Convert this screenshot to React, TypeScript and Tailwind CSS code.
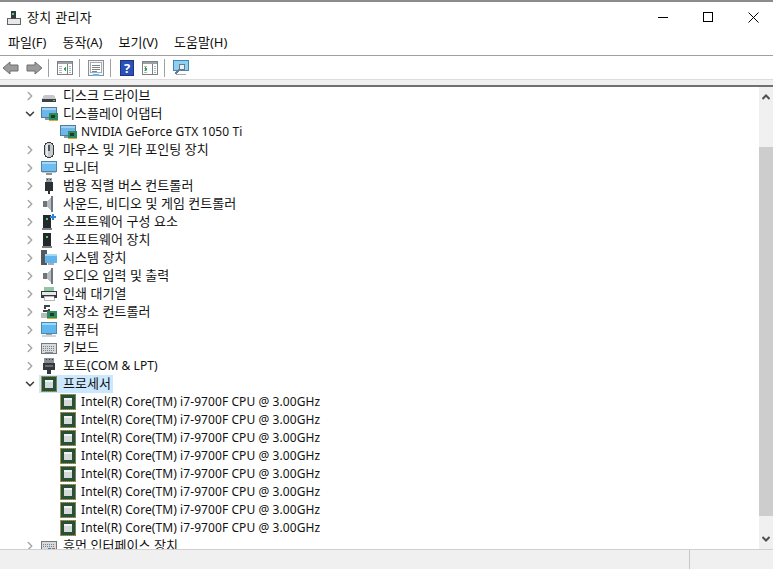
import type { ReactNode } from "react";
import { ChevronRight, ChevronDown } from "lucide-react";

const font = "font-['Noto_Sans','Noto_Sans_CJK_KR',sans-serif]";

const Icon = ({ children, className = "" }: { children: ReactNode; className?: string }) => (
  <svg viewBox="0 0 16 16" className={`w-4 h-4 shrink-0 ${className}`} shapeRendering="crispEdges">
    {children}
  </svg>
);

// small monitor + board shared by display adapter rows
const AdapterIcon = () => (
  <svg viewBox="0 0 18 16" className="w-[18px] h-4 shrink-0" shapeRendering="crispEdges">
    <rect x="0.5" y="1.5" width="15" height="10" fill="#6fb7ea" stroke="#4b7d9f" />
    <rect x="1" y="2" width="14" height="2" fill="#9fd3f5" />
    <rect x="4" y="12" width="6" height="2" fill="#8a9aa5" />
    <rect x="8" y="7" width="9" height="8" fill="#2f8a5b" />
    <rect x="10" y="9" width="4" height="3" fill="#1b3d2a" />
    <rect x="8" y="14" width="9" height="1" fill="#d9a93a" />
  </svg>
);

const CpuIcon = () => (
  <svg viewBox="0 0 16 16" className="w-4 h-4 shrink-0" shapeRendering="crispEdges">
    <rect x="0" y="0" width="16" height="16" fill="#a8924a" />
    <path d="M1 0v16M3 0v16M5 0v16M7 0v16M9 0v16M11 0v16M13 0v16M15 0v16" stroke="#5d6b45" strokeWidth="0.5" />
    <rect x="1" y="1" width="14" height="14" fill="#24513b" />
    <rect x="4" y="4" width="8" height="8" fill="#d5d9d7" />
    <rect x="4" y="4" width="8" height="2" fill="#f1f2f1" />
  </svg>
);

const DiskIcon = () => (
  <Icon>
    <path d="M3 7h10l2 4v3H1v-3z" fill="#c4c8cb" />
    <rect x="1" y="11" width="14" height="3" fill="#3b4044" />
    <rect x="12" y="12" width="2" height="1" fill="#58d06a" />
  </Icon>
);

const MouseIcon = () => (
  <Icon>
    <rect x="3.5" y="0.5" width="9" height="15" rx="4.5" fill="#c3c8cc" stroke="#34393d" />
    <rect x="5" y="2" width="2" height="12" fill="#e6e8ea" />
    <rect x="7" y="3" width="2" height="6" fill="#4f575d" />
  </Icon>
);

const MonitorIcon = () => (
  <Icon>
    <rect x="0.5" y="1.5" width="15" height="10" fill="#6ebcf0" stroke="#4f87ac" />
    <rect x="1" y="2" width="14" height="2" fill="#a4d8f7" />
    <rect x="1" y="12" width="14" height="1" fill="#c8ccd0" />
    <rect x="5" y="13" width="6" height="2" fill="#8c9499" />
  </Icon>
);

const UsbIcon = () => (
  <Icon>
    <rect x="5" y="0" width="6" height="4" fill="#9aa0a4" />
    <rect x="6" y="1" width="1" height="1" fill="#33383c" />
    <rect x="9" y="1" width="1" height="1" fill="#33383c" />
    <rect x="4" y="4" width="8" height="9" fill="#2c3134" />
    <rect x="7" y="13" width="2" height="3" fill="#2c3134" />
  </Icon>
);

const SpeakerIcon = () => (
  <Icon>
    <path d="M2 5h4v6H2z" fill="#6f7579" />
    <path d="M6 5l5-5v16l-5-5z" fill="#b7bcc0" />
    <rect x="10" y="0" width="2" height="16" fill="#70767b" />
  </Icon>
);

const SoftwareIcon = ({ plus = false }: { plus?: boolean }) => (
  <Icon>
    <rect x="2" y="1" width="8" height="13" fill="#24282b" />
    <rect x="1" y="14" width="10" height="2" fill="#7c8287" />
    <rect x="5" y="4" width="2" height="2" fill="#58d06a" />
    {plus && <path d="M11 0h2v2h2v2h-2v2h-2V4H9V2h2z" fill="#2f86d6" />}
  </Icon>
);

const SystemIcon = () => (
  <Icon>
    <rect x="0" y="0" width="6" height="15" fill="#55595d" />
    <rect x="4" y="4" width="12" height="9" fill="#62b4ec" />
    <rect x="4" y="4" width="12" height="2" fill="#a4d8f7" />
    <rect x="7" y="13" width="6" height="2" fill="#a5abb0" />
  </Icon>
);

const PrinterIcon = () => (
  <Icon>
    <rect x="3" y="1" width="10" height="4" fill="#8ec7a3" />
    <rect x="0" y="5" width="16" height="7" fill="#34383b" />
    <rect x="1" y="6" width="14" height="3" fill="#e6e8ea" />
    <rect x="3" y="10" width="10" height="4" fill="#ffffff" stroke="#6b7074" strokeWidth="0.5" />
  </Icon>
);

const StorageIcon = () => (
  <Icon>
    <path d="M3 1h6v2H5v2h4v3H2V6h5V5H3z" fill="#3f4448" />
    <rect x="0" y="9" width="8" height="5" fill="#b7bcc0" />
    <rect x="6" y="7" width="10" height="8" fill="#2f8a5b" />
    <rect x="9" y="9" width="4" height="3" fill="#1b3d2a" />
    <rect x="6" y="14" width="10" height="1" fill="#d9a93a" />
  </Icon>
);

const ComputerIcon = () => (
  <Icon>
    <rect x="0.5" y="0.5" width="15" height="11" fill="#5fb8ee" stroke="#4f87ac" />
    <rect x="1" y="1" width="14" height="2" fill="#a4d8f7" />
    <rect x="5" y="12" width="6" height="1" fill="#9aa0a5" />
    <rect x="1" y="13" width="14" height="2" fill="#d2d5d8" />
  </Icon>
);

const KeyboardIcon = () => (
  <Icon>
    <rect x="0.5" y="3.5" width="15" height="10" fill="#d7dadc" stroke="#73797e" />
    <path d="M2 6h12M2 8h12M2 10h12" stroke="#7d8287" strokeDasharray="1 1" />
    <rect x="4" y="12" width="8" height="1" fill="#8a8f94" />
  </Icon>
);

const PortIcon = () => (
  <Icon>
    <rect x="3" y="0" width="10" height="5" fill="#8a9095" />
    <path d="M5 1h1v1H5zM8 1h1v1H8zM11 1h1v1h-1z" fill="#34393d" />
    <rect x="2" y="5" width="12" height="7" fill="#34393d" />
    <rect x="4" y="7" width="8" height="2" fill="#6a7075" />
    <rect x="6" y="12" width="4" height="4" fill="#34393d" />
  </Icon>
);

const HidIcon = () => (
  <Icon>
    <rect x="0.5" y="3.5" width="15" height="10" fill="#d7dadc" stroke="#73797e" />
    <path d="M2 6h12M2 8h12" stroke="#7d8287" strokeDasharray="1 1" />
    <rect x="7" y="10" width="3" height="3" fill="#2f86d6" />
    <rect x="11" y="10" width="3" height="3" fill="#d9534f" />
  </Icon>
);

type Row = { label: ReactNode; icon: ReactNode; open?: boolean; selected?: boolean };

const cpu = "Intel(R) Core(TM) i7-9700F CPU @ 3.00GHz";

const TopRow = ({ label, icon, open, selected }: Row) => (
  <div className="h-[18px] flex items-center shrink-0">
    <div className="w-[39px] pl-[23px] shrink-0">
      {open ? (
        <ChevronDown className="w-[14px] h-[14px] text-[#404040]" strokeWidth={2.75} />
      ) : (
        <ChevronRight className="w-[14px] h-[14px] text-[#a6a6a6]" strokeWidth={2.5} />
      )}
    </div>
    <div className={`h-[18px] flex items-center pl-[2px] pr-[2px] ${selected ? "bg-[#cce8ff]" : ""}`}>
      <div className="w-[19px]">{icon}</div>
      <span className="text-[13px] leading-[16px] mb-[2px] pl-[3px] text-[#111] tracking-[0.05px] whitespace-nowrap">{label}</span>
    </div>
  </div>
);

const ChildRow = ({ label, icon }: { label: string; icon: ReactNode }) => (
  <div className="h-[18px] flex items-center pl-[60px] shrink-0">
    <div className="w-[21px]">{icon}</div>
    <span className="text-[12px] leading-[18px] text-[#111] tracking-[0.08px] whitespace-nowrap">{label}</span>
  </div>
);

const Separator = () => <div className="w-px h-[18px] bg-[#a0a0a0]" />;

const ToolIcon = ({ children }: { children: ReactNode }) => (
  <svg viewBox="0 0 16 16" className="w-4 h-4" shapeRendering="crispEdges">
    {children}
  </svg>
);

const PaneIcon = ({ arrow }: { arrow: string }) => (
  <ToolIcon>
    <rect x="0.5" y="1.5" width="15" height="13" fill="#fff" stroke="#7b8186" />
    <rect x="1" y="2" width="14" height="2" fill="#9aa0a5" />
    <rect x="10" y="4" width="1" height="10" fill="#7b8186" />
    <path d="M2 6h3M2 8h3M2 10h3M2 12h3M12 6h2M12 8h2M12 10h2M12 12h2" stroke="#b0b5b9" />
    <path d={arrow} fill="#27a844" />
  </ToolIcon>
);

export default function App() {
  return (
    <div className={`w-[773px] h-[569px] bg-white overflow-hidden flex flex-col ${font}`}>
      {/* title bar */}
      <div className="h-[30px] shrink-0 border-t-2 border-[#8c8c8c] flex items-center">
        <div className="pl-[7px] pr-[6px] pt-[3px]">
          <svg viewBox="0 0 16 16" className="w-[14px] h-[16px]" shapeRendering="crispEdges">
            <rect x="5" y="0" width="5" height="9" fill="#33383c" />
            <rect x="6" y="2" width="2" height="2" fill="#58d06a" />
            <rect x="0" y="9" width="15" height="6" fill="#e8e8e8" stroke="#4a4f53" />
          </svg>
        </div>
        <span className="text-[13px] text-[#111] tracking-[0.3px] pt-[3px]">장치 관리자</span>
        <div className="ml-auto flex items-center gap-[35px] pr-[14px] pt-[2px]">
          <div className="w-[10px] h-px bg-black" />
          <div className="w-[10px] h-[10px] border border-black" />
          <svg viewBox="0 0 11 11" className="w-[11px] h-[11px]">
            <path d="M0.5 0.5l10 10M10.5 0.5l-10 10" stroke="#000" strokeWidth="1" fill="none" />
          </svg>
        </div>
      </div>

      {/* menu */}
      <div className="h-[26px] shrink-0 flex items-center gap-[16px] pl-[8px] pt-[1px] border-b border-[#a0a0a0] text-[13px] text-[#111]">
        <span>파일(F)</span>
        <span>동작(A)</span>
        <span>보기(V)</span>
        <span>도움말(H)</span>
      </div>

      {/* toolbar */}
      <div className="h-[23px] shrink-0 flex items-center pl-[3px] pt-[1px]">
        <svg viewBox="0 0 16 14" className="w-4 h-[14px]">
          <path d="M0 7l7-6v3h8v6H7v3z" fill="#9b9b9b" stroke="#6f6f6f" />
        </svg>
        <svg viewBox="0 0 16 14" className="w-4 h-[14px] ml-[7px]">
          <path d="M16 7L9 1v3H1v6h8v3z" fill="#9b9b9b" stroke="#6f6f6f" />
        </svg>
        <div className="ml-[6px]"><Separator /></div>
        <div className="ml-[8px]"><PaneIcon arrow="M9 7v4L6 9z" /></div>
        <div className="ml-[6px]"><Separator /></div>
        <div className="ml-[8px]">
          <ToolIcon>
            <rect x="0.5" y="0.5" width="15" height="15" fill="#f1f3f4" stroke="#8a9096" />
            <rect x="2.5" y="2.5" width="11" height="10" fill="#fff" stroke="#a5abb0" />
            <path d="M4 5h8M4 7h8M4 9h8M4 11h5" stroke="#7c8287" />
            <rect x="5" y="14" width="6" height="2" fill="#5fb8ee" />
          </ToolIcon>
        </div>
        <div className="ml-[6px]"><Separator /></div>
        <div className="ml-[9px] w-[14px] h-4 bg-[#2b50b8] border border-[#1c3580] flex items-center justify-center text-white text-[13px] font-bold leading-none">?</div>
        <div className="ml-[8px]"><PaneIcon arrow="M3 7v4l3-2z" /></div>
        <div className="ml-[6px]"><Separator /></div>
        <div className="ml-[8px]">
          <ToolIcon>
            <rect x="0.5" y="0.5" width="15" height="10" fill="#8fd0f2" stroke="#3f86b4" />
            <circle cx="9" cy="7" r="3" fill="#dff1fb" stroke="#6c7a84" />
            <path d="M6.5 9.5L2 14" stroke="#6c7a84" strokeWidth="2" />
            <rect x="3" y="14" width="10" height="1" fill="#a5abb0" />
          </ToolIcon>
        </div>
      </div>

      {/* band above the list */}
      <div className="h-[8px] shrink-0 bg-[#f0f0f0] border-t border-[#dcdcdc] border-b-2 border-b-[#707070]" />

      {/* list + scrollbar */}
      <div className="flex-1 min-h-0 flex">
        <div className="flex-1 min-w-0 overflow-hidden">
          <TopRow label="디스크 드라이브" icon={<DiskIcon />} />
          <TopRow label="디스플레이 어댑터" icon={<AdapterIcon />} open />
          <ChildRow label="NVIDIA GeForce GTX 1050 Ti" icon={<AdapterIcon />} />
          <TopRow label="마우스 및 기타 포인팅 장치" icon={<MouseIcon />} />
          <TopRow label="모니터" icon={<MonitorIcon />} />
          <TopRow label="범용 직렬 버스 컨트롤러" icon={<UsbIcon />} />
          <TopRow label="사운드, 비디오 및 게임 컨트롤러" icon={<SpeakerIcon />} />
          <TopRow label="소프트웨어 구성 요소" icon={<SoftwareIcon plus />} />
          <TopRow label="소프트웨어 장치" icon={<SoftwareIcon />} />
          <TopRow label="시스템 장치" icon={<SystemIcon />} />
          <TopRow label="오디오 입력 및 출력" icon={<SpeakerIcon />} />
          <TopRow label="인쇄 대기열" icon={<PrinterIcon />} />
          <TopRow label="저장소 컨트롤러" icon={<StorageIcon />} />
          <TopRow label="컴퓨터" icon={<ComputerIcon />} />
          <TopRow label="키보드" icon={<KeyboardIcon />} />
          <TopRow label={<>포트<span className="text-[12px]">(COM &amp; LPT)</span></>} icon={<PortIcon />} />
          <TopRow label="프로세서" icon={<CpuIcon />} open selected />
          {Array.from({ length: 8 }).map((_, i) => (
            <ChildRow key={i} label={cpu} icon={<CpuIcon />} />
          ))}
          <TopRow label="휴먼 인터페이스 장치" icon={<HidIcon />} />
        </div>
        <div className="w-[14px] shrink-0 bg-[#f0f0f0] flex flex-col items-center">
          <div className="h-[60px] w-full pt-[7px] flex justify-center">
            <svg viewBox="0 0 8 6" className="w-2 h-[6px]"><path d="M0.5 5L4 1.5 7.5 5" stroke="#505050" strokeWidth="2" fill="none" /></svg>
          </div>
          <div className="h-[369px] w-full bg-[#cdcdcd]" />
          <div className="flex-1 w-full flex items-end justify-center pb-[7px]">
            <svg viewBox="0 0 8 6" className="w-2 h-[6px]"><path d="M0.5 1L4 4.5 7.5 1" stroke="#505050" strokeWidth="2" fill="none" /></svg>
          </div>
        </div>
      </div>

      {/* status bar */}
      <div className="h-[20px] shrink-0 bg-[#f0f0f0] border-t border-[#d0d0d0] flex">
        <div className="w-[690px] border-r border-[#c8c8c8]" />
      </div>
    </div>
  );
}
